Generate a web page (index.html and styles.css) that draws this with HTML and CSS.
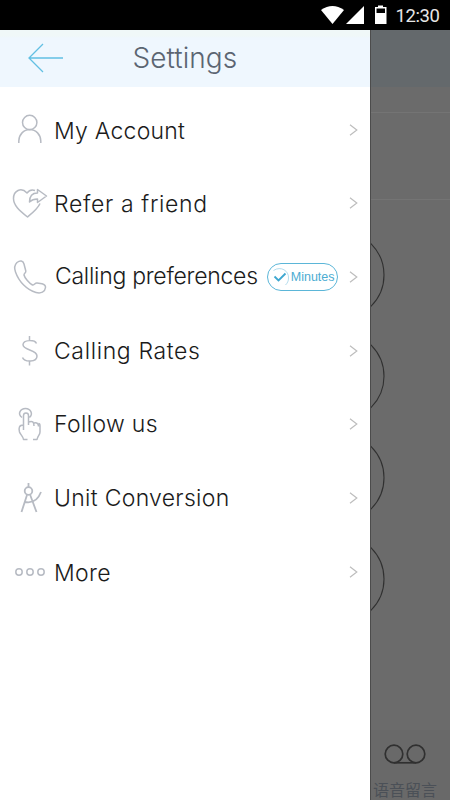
FILE: index.html
```
<!DOCTYPE html>
<html lang="en">
<head>
<meta charset="utf-8">
<title>Settings</title>
<link rel="stylesheet" href="styles.css">
</head>
<body>
<div class="screen">
  <header class="status">
    <svg width="68" height="20" viewBox="321 5 68 20" fill="#fff"><path d="M321 10Q332.500 2 344 10L332.500 24Z"/><path d="M364 6V24H346Z"/><path fill-rule="evenodd" d="M375 7h3V5.500h5V7h3.500v17H375ZM376.500 8.500v4.500h8.500V8.500Z"/></svg>
    <span class="time">12:30</span>
  </header>
  <div class="content">
    <main class="drawer">
      <div class="topbar">
        <svg class="back" width="36" height="30" viewBox="0 0 36 30"><path d="M15 1 1 15l14 14M1 15h34"/></svg>
        <h1>Settings</h1>
      </div>
      <nav class="menu">
        <a class="row account"><svg class="icon" viewBox="0 0 36 36"><circle cx="17.700" cy="10.500" r="7.200"/><path d="M6.800 31v-2a11 11.500 0 0 1 22 0v2"/></svg><span class="label">My Account</span><svg class="chev" viewBox="0 0 9 12"><path d="m1 .8 6.800 5.200L1 11.200"/></svg></a>
        <a class="row refer"><svg class="icon" viewBox="0 0 36 36"><path d="M23 5.500C19 4 16.500 6 15 8 9 1.500 1.500 6 1.500 13.500c0 7 6 12 14 18.500C21 27.500 26 23.500 28 18.500M17.500 17c0-6 3-9 8-9V4.500L34.500 11 25.500 17.500V14c-4 0-6 1-8 3Z"/></svg><span class="label">Refer a friend</span><svg class="chev" viewBox="0 0 9 12"><path d="m1 .8 6.800 5.200L1 11.200"/></svg></a>
        <a class="row preferences"><svg class="icon" viewBox="0 0 36 36"><path d="M5 3.500C2.500 6 2 9 3.500 13 7 23 15 31 24 33.500c5 1.300 9-.5 9.500-5 .2-2-1-3-3.500-3.700l-5-.8c-2-.3-2.500 2-4.500 2C17 24 12.500 18.500 12 16c0-2 2.200-2 1.800-4L12 5C11 1.500 8 1.200 5 3.500Z"/></svg><span class="label">Calling preferences</span><span class="pill"><svg width="20" height="22" viewBox="0 0 20 22"><path class="ring" d="M2.500 4.500C10-.5 18 5 17.500 12c0 3-1 5-3 7"/><path class="tick" d="m3.500 10.500 4 4 7-7"/></svg>Minutes</span><svg class="chev" viewBox="0 0 9 12"><path d="m1 .8 6.800 5.200L1 11.200"/></svg></a>
        <a class="row rates"><svg class="icon" viewBox="0 0 36 36"><path d="M17.500 3v4.500M17.500 28v4.500M24.500 10.500c-2-4-13-4-13.500 1-.3 6 14 5 14 11.500 0 6.500-12.500 6.500-14.500 1.500"/></svg><span class="label">Calling Rates</span><svg class="chev" viewBox="0 0 9 12"><path d="m1 .8 6.800 5.200L1 11.200"/></svg></a>
        <a class="row follow"><svg class="icon" viewBox="0 0 36 36"><path d="M10 11.500C5 8 8.500 2.500 13.500 2.500s8 5.500 4 9M11.500 24V9.500c0-3.500 5-3.500 5 0V19M16.500 16c4-1.500 5.500 0 5.500 4M22 17c3-.8 4.500.5 4.500 3.500M26.500 17.500c1.500 0 1.500 1 1.500 2.500v6c0 3-2.500 4-3 7.500h-4M11.500 19C7 19 6.500 22 7.500 26c1 3 3.500 4 4 7.500h4"/></svg><span class="label">Follow us</span><svg class="chev" viewBox="0 0 9 12"><path d="m1 .8 6.800 5.200L1 11.200"/></svg></a>
        <a class="row unit"><svg class="icon heavy" viewBox="0 0 36 36"><circle cx="16.500" cy="11" r="3.800"/><path d="M16.500 3v4M15 15 9.500 32M18.200 15 24.500 32M13 22c8 1.500 13-2 16-10"/></svg><span class="label">Unit Conversion</span><svg class="chev" viewBox="0 0 9 12"><path d="m1 .8 6.800 5.200L1 11.200"/></svg></a>
        <a class="row more"><svg class="icon" viewBox="0 0 36 36"><circle cx="7" cy="18" r="3.200"/><circle cx="18" cy="18" r="3.200"/><circle cx="29" cy="18" r="3.200"/></svg><span class="label">More</span><svg class="chev" viewBox="0 0 9 12"><path d="m1 .8 6.800 5.200L1 11.200"/></svg></a>
      </nav>
    </main>
    <aside class="behind">
      <div class="behind-top"></div>
      <div class="behind-strip"></div>
      <div class="behind-card"></div>
      <svg class="dial" width="79" height="400" viewBox="0 0 79 400"><circle cx="-31" cy="46" r="44"/><circle cx="-31" cy="147.300" r="44"/><circle cx="-31" cy="248.700" r="44"/><circle cx="-31" cy="350" r="44"/></svg>
      <div class="voicemail">
        <svg width="42" height="20" viewBox="0 0 42 20"><circle cx="10" cy="10" r="8.800"/><circle cx="32" cy="10" r="8.800"/><path d="M10 18.800h22"/></svg>
        <span>语音留言</span>
      </div>
    </aside>
  </div>
</div>
</body>
</html>
```
FILE: styles.css
```
* { box-sizing: border-box; }
body { margin: 0; font-family: Inter, "Noto Sans CJK SC", sans-serif; }
svg { flex: none; display: block; }
.screen { width: 450px; height: 800px; display: flex; flex-direction: column; overflow: hidden; background: #fff; }
.status { height: 30px; background: #000; display: flex; align-items: center; padding-left: 321px; gap: 6.500px; flex: none; }
.time { color: #e6e6e6; font: 400 18.500px/30px Roboto, sans-serif; white-space: nowrap; padding-top: 2px; letter-spacing: -.4px; }
.content { flex: 1; display: flex; min-height: 0; }
.drawer { width: 370px; background: #fff; }
.topbar { height: 57px; display: flex; align-items: center; padding: 0 0 1px 28px; background: linear-gradient(#f0f8f8 0 6px, #eff7fe 8px); }
.back { fill: none; stroke: #62c0e3; stroke-width: 1.300; }
h1 { margin: -1px 0 0 68.500px; font-size: 28px; line-height: 36px; font-weight: 300; color: #5b6572; letter-spacing: .05px; }
.menu { padding-top: 6px; display: grid; grid-auto-rows: 73.600px; }
.row { display: flex; align-items: center; padding: 0 12px; color: #1b1b1b; }
.icon { width: 36px; height: 36px; fill: none; stroke: #b7bbc3; stroke-width: 1.500; stroke-linejoin: round; }
.heavy { stroke-width: 1.800; }
.label { margin-left: 6px; padding-top: 1px; font-size: 23px; line-height: 30px; font-weight: 300; white-space: nowrap; letter-spacing: .3px; }
.account .label { padding-top: 2px; letter-spacing: .25px; }
.refer .label { letter-spacing: .65px; }
.preferences .label { margin-left: 7px; padding-top: 0; margin-top: -1px; letter-spacing: -.27px; }
.rates .label { letter-spacing: .63px; }
.follow .label { padding-top: 0; margin-top: -1px; letter-spacing: .35px; }
.more .label { padding-top: 3px; }
.chev { width: 9px; height: 12px; margin-left: auto; fill: none; stroke: #bdbdbd; stroke-width: 1.200; }
.more .icon, .more .chev { margin-top: 1px; }
.pill { width: 71px; height: 28px; margin-left: 9px; border: 1.500px solid #5bb6d8; border-radius: 14px; display: flex; align-items: center; padding-left: 3px; font: 12.500px "Liberation Sans", sans-serif; color: #4bacd2; white-space: nowrap; }
.pill svg { fill: none; }
.ring { stroke: #9fd3e8; stroke-width: .8; }
.tick { stroke: #3ea7d0; stroke-width: 1.800; }
.behind { width: 80px; background: #6b6b6b; border-left: 1px solid #4c4c4c; display: flex; flex-direction: column; }
.behind-top { height: 57px; background: #64696c; }
.behind-strip { height: 26px; border-bottom: 1px solid #747474; }
.behind-card { height: 87px; border-bottom: 1px solid #747474; }
.dial { margin-top: 29px; fill: none; stroke: #303030; stroke-width: 1.100; }
.voicemail { margin-top: auto; height: 70px; padding-top: 14px; display: flex; flex-direction: column; background: #696969; }
.voicemail svg { margin-left: 13px; fill: none; stroke: #303030; stroke-width: 1.700; }
.voicemail span { margin: 13px 0 0 2px; font: 16px/24px "Noto Sans CJK SC", sans-serif; color: #4b5057; white-space: nowrap; }
```
